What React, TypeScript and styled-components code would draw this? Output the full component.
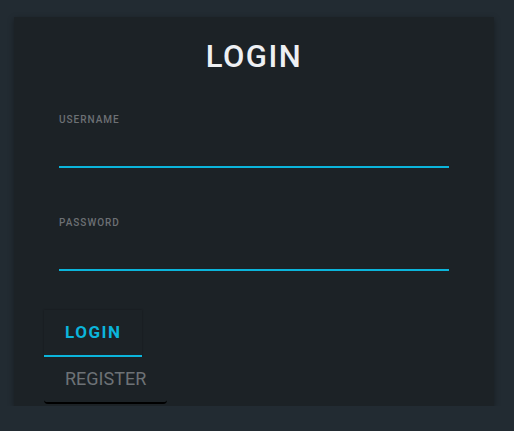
import React from 'react'
import styled, {createGlobalStyle} from 'styled-components'

const Global = createGlobalStyle`
body {
  margin: 0;
  background: #222b32;
  font-family: Roboto, "Liberation Sans", sans-serif;
}
`

const App = () => {
  return (
    <Page>
      <Global />
      <Card>
        <Title>LOGIN</Title>
        <Form>
          <Field>
            <Label>USERNAME</Label>
            <Input type="text" />
          </Field>
          <Field>
            <Label>PASSWORD</Label>
            <Input type="password" />
          </Field>
        </Form>
        <Buttons>
          <Tab active>LOGIN</Tab>
          <Tab>REGISTER</Tab>
        </Buttons>
      </Card>
    </Page>
  )
}

export default App

const Page = styled.div`
padding: 17px 20px 0 14px;
`

const Card = styled.div`
width: 480px;
height: 389px;
box-sizing: border-box;
background: #1c2226;
box-shadow: 0 2px 6px rgba(0,0,0,0.35);
padding-top: 21px;
`

const Title = styled.h1`
margin: 0;
text-align: center;
font-size: 31px;
font-weight: 500;
letter-spacing: 1.5px;
color: #eef0f3;
line-height: 38px;
`

const Form = styled.div`
padding: 38px 45px 0 45px;
display: flex;
flex-direction: column;
gap: 49px;
`

const Field = styled.div`
display: flex;
flex-direction: column;
`

const Label = styled.label`
font-size: 10px;
font-weight: 500;
letter-spacing: 1px;
color: #6c7074;
line-height: 12px;
`

const Input = styled.input`
background: transparent;
border: none;
border-bottom: 2px solid #0bb5db;
height: 40px;
padding: 0;
outline: none;
color: #eef0f3;
`

const Buttons = styled.div`
display: flex;
flex-direction: column;
align-items: flex-start;
padding: 39px 0 0 30px;
`

const Tab = styled.button<{active?: boolean}>`
background: #1c2226;
border: none;
font-family: Roboto, "Liberation Sans", sans-serif;
height: 47px;
padding: 0 21px 2px;
cursor: pointer;
${({active}) => active ? `
  font-size: 17px;
  font-weight: 700;
  letter-spacing: 1.5px;
  color: #0bb5db;
  border-bottom: 2px solid #0bb5db;
  box-shadow: 0 0 2px rgba(0,0,0,0.3);
` : `
  font-size: 18px;
  font-weight: 400;
  color: #6d7276;
  border-bottom: 2px solid #000;
  border-radius: 0 0 4px 4px;
`}
`
